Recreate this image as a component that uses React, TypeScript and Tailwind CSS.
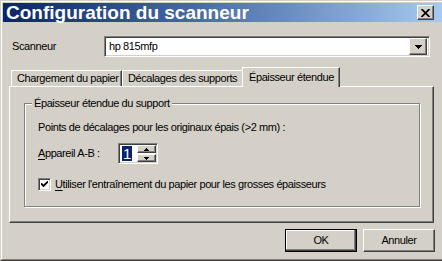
import React from "react";

function DownTri() {
  return (
    <svg width="7" height="4" viewBox="0 0 7 4" className="block">
      <path d="M0 0h7L3.5 4z" fill="#000" shapeRendering="crispEdges" />
    </svg>
  );
}

export default function App() {
  return (
    <div className="w-[442px] h-[261px] bg-[#d4d0c8] flex flex-col border-t border-l border-b border-t-[#d4d0c8] border-l-[#d4d0c8] border-b-[#404040] overflow-hidden font-['Liberation_Sans',Arial,sans-serif] text-[11px] leading-[13px] tracking-[-0.4px] text-black">
      <div className="flex-1 flex flex-col border-t border-l border-b border-t-white border-l-white border-b-[#808080] pt-[1px] pl-[1px]">
        {/* Title bar */}
        <div className="h-[19px] bg-linear-to-r from-[#0a246a] to-[#a6caf0] flex items-center">
          <span className="pl-[3px] text-white font-bold text-[19px] leading-[19px] tracking-normal whitespace-nowrap">
            Configuration du scanneur
          </span>
          <div className="ml-auto mr-[8px] w-[17px] h-[15px] bg-[#d4d0c8] border-t border-l border-r border-b border-t-white border-l-white border-r-[#404040] border-b-[#404040] shadow-[inset_-1px_-1px_0_#808080] flex items-center justify-center">
            <svg width="9" height="8" viewBox="0 0 9 8" className="block">
              <path d="M0.5 0L8.5 8M8.5 0L0.5 8" stroke="#000" strokeWidth="1.7" />
            </svg>
          </div>
        </div>

        {/* Scanner row */}
        <div className="mt-[14px] flex items-center h-[21px] pl-[9px]">
          <span className="w-[92px]">Scanneur</span>
          <div className="w-[326px] h-[21px] bg-white flex items-center border-t border-l border-r border-b border-t-[#808080] border-l-[#808080] border-r-white border-b-white shadow-[inset_1px_1px_0_#404040,inset_-1px_-1px_0_#d4d0c8] pl-[4px] pr-[2px] pt-[1px] pb-[1px]">
            <span className="flex-1">hp 815mfp</span>
            <div className="w-[18px] h-[17px] bg-[#d4d0c8] flex items-center justify-center border-t border-l border-r border-b border-t-white border-l-white border-r-[#404040] border-b-[#404040] shadow-[inset_-1px_-1px_0_#808080]">
              <DownTri />
            </div>
          </div>
        </div>

        {/* Tabs */}
        <div className="mt-[10px] h-[19px] flex items-end pl-[8px]">
          <div className="w-[111px] h-[16px] pl-[5px] pt-[1px] overflow-hidden whitespace-nowrap border-t border-l border-r border-t-white border-l-white border-r-[#404040] shadow-[inset_-1px_0_0_#808080]">
            Chargement du papier
          </div>
          <div className="w-[122px] h-[16px] pl-[5px] pt-[1px] overflow-hidden whitespace-nowrap border-t border-l border-r border-t-white border-l-white border-r-[#404040] shadow-[inset_-1px_0_0_#808080]">
            Décalages des supports
          </div>
          <div className="relative z-10 ml-[-2px] mb-[-1px] w-[98px] h-[20px] pl-[6px] pt-[3px] bg-[#d4d0c8] whitespace-nowrap border-t border-l border-r border-t-white border-l-white border-r-[#404040] shadow-[inset_-1px_0_0_#808080]">
            Épaisseur étendue
          </div>
        </div>

        {/* Panel */}
        <div className="ml-[6px] w-[425px] h-[137px] pt-[16px] pl-[14px] border-t border-l border-r border-b border-t-white border-l-white border-r-[#404040] border-b-[#404040] shadow-[inset_-1px_-1px_0_#808080]">
          <div className="relative w-[396px] h-[104px] border border-[#808080] shadow-[inset_1px_1px_0_#fff,1px_1px_0_#fff] pt-[17px] pl-[13px]">
            <span className="absolute left-[7px] top-[-7px] px-[2px] bg-[#d4d0c8] whitespace-nowrap">
              Épaisseur étendue du support
            </span>
            <div className="whitespace-nowrap">Points de décalages pour les originaux épais (&gt;2 mm) :</div>
            <div className="mt-[9px] flex items-center h-[21px]">
              <span className="w-[80px]">
                <span className="underline underline-offset-[2px]">A</span>ppareil A-B :
              </span>
              <div className="w-[40px] h-[21px] bg-white flex border-t border-l border-r border-b border-t-[#808080] border-l-[#808080] border-r-white border-b-white shadow-[inset_1px_1px_0_#404040,inset_-1px_-1px_0_#d4d0c8] p-[1px]">
                <div className="flex-1 flex items-center pl-[2px]">
                  <span className="bg-[#0a246a] text-white text-[15px] leading-[15px] tracking-normal px-[1px]">1</span>
                </div>
                <div className="w-[19px] flex flex-col">
                  <div className="h-[8px] bg-[#d4d0c8] flex items-center justify-center border-t border-l border-r border-b border-t-white border-l-white border-r-[#404040] border-b-[#404040] shadow-[inset_-1px_-1px_0_#808080]">
                    <svg width="5" height="3" viewBox="0 0 5 3" className="block">
                      <path d="M2.5 0L5 3H0z" fill="#000" shapeRendering="crispEdges" />
                    </svg>
                  </div>
                  <div className="mt-[1px] h-[8px] bg-[#d4d0c8] flex items-center justify-center border-t border-l border-r border-b border-t-white border-l-white border-r-[#404040] border-b-[#404040] shadow-[inset_-1px_-1px_0_#808080]">
                    <svg width="5" height="3" viewBox="0 0 5 3" className="block">
                      <path d="M0 0h5L2.5 3z" fill="#000" shapeRendering="crispEdges" />
                    </svg>
                  </div>
                </div>
              </div>
            </div>
            <div className="mt-[14px] flex items-center h-[13px]">
              <div className="w-[13px] h-[13px] bg-white flex items-center justify-center border-t border-l border-r border-b border-t-[#808080] border-l-[#808080] border-r-white border-b-white shadow-[inset_1px_1px_0_#404040,inset_-1px_-1px_0_#d4d0c8]">
                <svg width="7" height="7" viewBox="0 0 7 7" className="block">
                  <path d="M0 2.5L2.5 5L7 0.5" stroke="#000" strokeWidth="1.8" fill="none" />
                </svg>
              </div>
              <span className="ml-[4px] whitespace-nowrap">
                <span className="underline underline-offset-[2px]">U</span>tiliser l'entraînement du papier pour les grosses épaisseurs
              </span>
            </div>
          </div>
        </div>

        {/* Buttons */}
        <div className="mt-[6px] flex justify-end gap-[6px] pr-[7px]">
          <div className="w-[72px] h-[23px] flex items-center justify-center border border-black shadow-[inset_-1px_-1px_0_#404040,inset_-2px_-2px_0_#808080,inset_1px_1px_0_#fff]">
            OK
          </div>
          <div className="w-[72px] h-[23px] flex items-center justify-center border-t border-l border-r border-b border-t-white border-l-white border-r-[#404040] border-b-[#404040] shadow-[inset_-1px_-1px_0_#808080]">
            Annuler
          </div>
        </div>
      </div>
    </div>
  );
}
